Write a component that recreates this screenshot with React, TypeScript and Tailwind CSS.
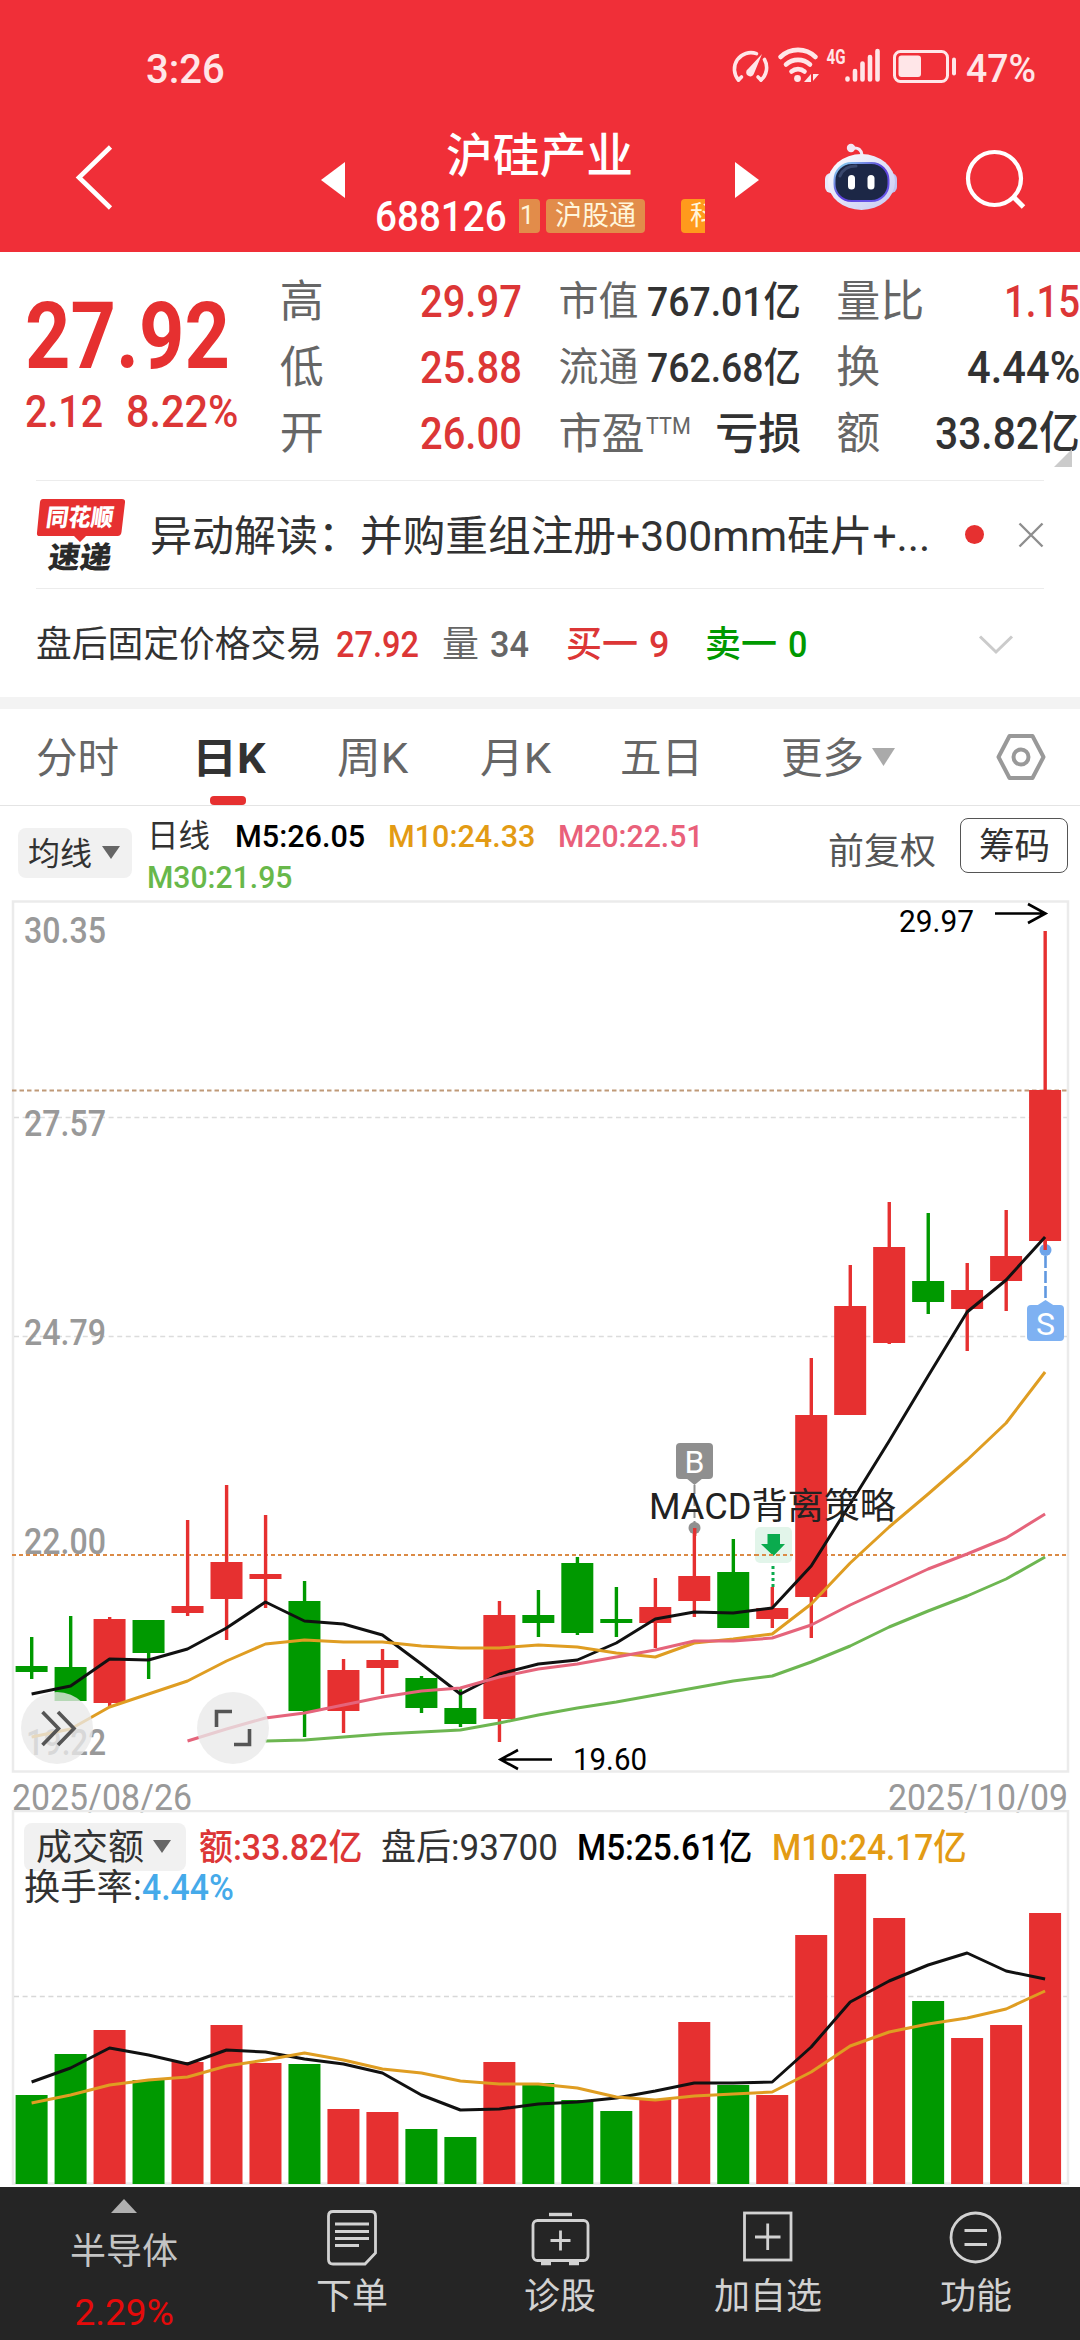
import React, { useLayoutEffect, useRef, useState } from "react";

const RED = "#e63030";
const GREEN = "#009900";
const X0 = 31.6;
const STEP = 38.98;
const cx = (i: number) => X0 + STEP * i;

/** Text squeezed or stretched horizontally to fill the width given by its class. */
function Fit({ className = "", children }: { className?: string; children: React.ReactNode }) {
  const outer = useRef<HTMLSpanElement>(null);
  const inner = useRef<HTMLSpanElement>(null);
  const [scale, setScale] = useState(1);
  useLayoutEffect(() => {
    if (outer.current && inner.current) {
      setScale(outer.current.clientWidth / inner.current.offsetWidth);
    }
  }, []);
  return (
    <span ref={outer} className={"block shrink-0 whitespace-nowrap " + className}>
      <span ref={inner} className="inline-block origin-left" style={{ transform: `scaleX(${scale})` }}>
        {children}
      </span>
    </span>
  );
}

function StatusBar() {
  return (
    <div className="flex h-[93px] items-end text-[#ffe6e8]">
      <Fit className="ml-[146px] w-[79px] text-[41px] leading-[48px] font-medium">3:26</Fit>
      <svg className="mb-px ml-[505px] h-[52px] w-[234px]" viewBox="730 40 234 52" fill="none" stroke="#ffe6e8">
        <g strokeWidth="3.6" strokeLinecap="round">
          <path d="M738.5 80 A16.5 16.5 0 0 1 756.5 53.6" />
          <path d="M764.5 59.5 A16.5 16.5 0 0 1 761 80" />
          <path d="M738.5 80 l3-3 M761 80 l-3-3" />
        </g>
        <path d="M762 54 L748 69 a4 4 0 1 0 6 4.500 Z" fill="#ffe6e8" stroke="none" />
        <g strokeWidth="4.6" strokeLinecap="round">
          <path d="M780.500 57 a25 25 0 0 1 35 0" />
          <path d="M786 64.500 a18 18 0 0 1 24 0" />
          <path d="M791.500 71.500 a10 10 0 0 1 13 0" />
        </g>
        <circle cx="797.500" cy="78.500" r="3.400" fill="#ffe6e8" stroke="none" />
        <path d="M811 74 v8 h-7 Z M813 81 v-7 h6 Z" fill="#ffe6e8" stroke="none" />
        <text x="826.500" y="63.500" textLength="19" lengthAdjust="spacingAndGlyphs" fontSize="20" fontWeight="700" fill="#ffe6e8" stroke="none">4G</text>
        <g strokeWidth="4.600" strokeLinecap="round">
          <path d="M847.500 78.500 v1 M855 71 v8.500 M862.500 63.500 v16 M870 57 v22.500 M877.500 51 v28.500" />
        </g>
        <rect x="894.500" y="51.500" width="53" height="30" rx="6" strokeWidth="3" />
        <rect x="898.500" y="55.500" width="22.500" height="21.500" rx="3" fill="#ffe6e8" stroke="none" />
        <path d="M954 59.500 v14" strokeWidth="4" strokeLinecap="round" />
      </svg>
      <Fit className="ml-[2px] w-[70px] text-[39px] leading-[48px] font-medium">47%</Fit>
    </div>
  );
}

function Robot() {
  return (
    <svg className="ml-[66px] h-[68px] w-[72px]" viewBox="825 143 72 68">
      <defs>
        <linearGradient id="shell" x1="0" y1="0" x2="1" y2="1">
          <stop offset="0" stopColor="#ffffff" />
          <stop offset="1" stopColor="#c5c8f2" />
        </linearGradient>
        <linearGradient id="rim" x1="0" y1="0" x2="1" y2="1">
          <stop offset="0" stopColor="#8fe3f2" />
          <stop offset=".5" stopColor="#5b3fd8" />
          <stop offset="1" stopColor="#6a5cf0" />
        </linearGradient>
      </defs>
      <path d="M853 148 Q861 147 862 155" fill="none" stroke="#f3e9f7" strokeWidth="3" />
      <circle cx="851" cy="148" r="4.200" fill="#f3e6f4" />
      <rect x="825" y="173" width="14" height="20" rx="6" fill="#e9e9fb" />
      <rect x="883" y="173" width="14" height="20" rx="6" fill="#bfc2ef" />
      <ellipse cx="861.500" cy="182" rx="33.500" ry="28" fill="url(#shell)" />
      <rect x="834.500" y="163" width="54" height="38" rx="17" fill="#1c2746" stroke="url(#rim)" strokeWidth="2" />
      <path d="M840 176 q4-10 16-10" fill="none" stroke="#3a486d" strokeWidth="3" strokeLinecap="round" />
      <rect x="848" y="175" width="7" height="14.500" rx="3.500" fill="#fff" />
      <rect x="867.500" y="175" width="7" height="14.500" rx="3.500" fill="#fff" />
    </svg>
  );
}

function TitleBar() {
  return (
    <div className="-mt-px flex h-[160px] items-start text-white">
      <svg className="mt-[51px] ml-[74px] h-[70px] w-[42px]" viewBox="74 143 42 70">
        <path d="M110.500 147 L79 177.500 L110.500 208" fill="none" stroke="#fff" strokeWidth="4.600" />
      </svg>
      <svg className="mt-[70px] ml-[205px] h-[36px] w-[24px]" viewBox="0 0 24 36">
        <path d="M24 0 V36 L0 18 Z" fill="#fff" />
      </svg>
      <div className="ml-[30px] w-[330px]">
        <Fit className="mt-[34px] ml-[71px] w-[187px] text-[47px] leading-[60px] font-medium">沪硅产业</Fit>
        <div className="mt-[11px] flex items-center">
          <Fit className="w-[132px] text-[43px] leading-[38px] font-medium">688126</Fit>
          <div className="ml-[12px] flex h-[34px] w-[186px] items-center overflow-hidden text-[27px] leading-[34px] text-[#fff6dc]">
            <span className="h-[34px] w-[21px] shrink-0 rounded-r-[4px] bg-[#e28c4a] pl-px text-[25px]">1</span>
            <span className="ml-[6px] h-[34px] w-[99px] shrink-0 rounded-[4px] bg-[#e28c4a] text-center">沪股通</span>
            <span className="ml-[36px] h-[34px] w-[60px] shrink-0 rounded-[4px] bg-[#ff9a1c] pl-[9px]">科</span>
          </div>
        </div>
      </div>
      <svg className="mt-[70px] ml-[30px] h-[36px] w-[24px]" viewBox="0 0 24 36">
        <path d="M0 0 V36 L24 18 Z" fill="#fff" />
      </svg>
      <div className="mt-[51px]">
        <Robot />
      </div>
      <svg className="mt-[55px] ml-[66px] h-[64px] w-[66px]" viewBox="963 147 66 64" fill="none" stroke="#fff">
        <circle cx="994.500" cy="178.500" r="26.500" strokeWidth="4.200" />
        <path d="M1014 197.500 L1023.500 207" strokeWidth="5" />
      </svg>
    </div>
  );
}

const label = "text-[#666]";

function Quote() {
  return (
    <section className="relative flex h-[228px] items-start overflow-hidden pt-[17px] text-[#323232]">
      <div className="ml-[25px] w-[255px] pt-[20px] text-[#e63030]">
        <Fit className="w-[205px] text-[92px] leading-[96px] font-bold">27.92</Fit>
        <div className="flex font-medium text-[#dc3636]">
          <Fit className="w-[78px] text-[45px] leading-[54px]">2.12</Fit>
          <Fit className="ml-[23px] w-[112px] text-[45px] leading-[54px]">8.22%</Fit>
        </div>
      </div>
      <div className="w-[243px] text-[44px] leading-[66px]">
        {[["高", "29.97"], ["低", "25.88"], ["开", "26.00"]].map(([k, v]) => (
          <div key={k} className="flex justify-between">
            <span className={label}>{k}</span>
            <Fit className="w-[102px] text-[45px] font-medium text-[#dc3636]">{v}</Fit>
          </div>
        ))}
      </div>
      <div className="ml-[36px] w-[243px] leading-[66px]">
        {[["市值", "767.01亿"], ["流通", "762.68亿"]].map(([k, v]) => (
          <div key={k} className="flex justify-between">
            <span className={"text-[40px] " + label}>{k}</span>
            <Fit className="w-[154px] text-[41px] font-medium">{v}</Fit>
          </div>
        ))}
        <div className="flex">
          <span className={"text-[43px] " + label}>市盈</span>
          <Fit className="-mt-[8px] ml-[2px] w-[45px] text-[24px] text-[#666]">TTM</Fit>
          <span className="ml-auto text-[43px] font-medium">亏损</span>
        </div>
      </div>
      <div className="ml-[35px] w-[244px] text-[44px] leading-[66px]">
        <div className="flex justify-between">
          <span className={label}>量比</span>
          <Fit className="w-[76px] text-[45px] font-medium text-[#dc3636]">1.15</Fit>
        </div>
        <div className="flex justify-between">
          <span className={label}>换</span>
          <Fit className="w-[113px] text-[45px] font-medium">4.44%</Fit>
        </div>
        <div className="flex justify-between">
          <span className={label}>额</span>
          <Fit className="w-[145px] text-[45px] font-medium">33.82亿</Fit>
        </div>
      </div>
      <svg className="absolute top-[197px] right-[8px] h-[18px] w-[18px]" viewBox="0 0 18 18">
        <path d="M18 0 V18 H0 Z" fill="#cbcbcb" />
      </svg>
    </section>
  );
}

function News() {
  return (
    <section className="mx-[36px] flex h-[109px] items-center border-y border-[#ececec] text-[#323232]">
      <svg className="h-[76px] w-[90px]" viewBox="36 496 90 76">
        <path d="M43 498 H122 q3.500 0 3 3.500 L121.500 531 q-.5 4-4 4 H86 L80 541 L74 535 H39.500 q-3 0-2.500-3.500 L40 501 q.5-3 3-3 Z" fill={RED} />
        <g transform="skewX(-8)" fontWeight="900">
          <text x="119" y="525" textLength="67" lengthAdjust="spacingAndGlyphs" fontSize="24" fill="#fff">同花顺</text>
          <text x="127" y="567" textLength="63" lengthAdjust="spacingAndGlyphs" fontSize="30" fill="#2a2a2a">速递</text>
        </g>
      </svg>
      <div className="mt-[4px] flex text-[42px] leading-[60px]">
        <Fit className="ml-[24px] w-[210px]">异动解读：</Fit>
        <Fit className="w-[570px]">并购重组注册+300mm硅片+...</Fit>
      </div>
      <span className="ml-[35px] size-[19px] rounded-full bg-[#e63030]" />
      <svg className="ml-auto h-[26px] w-[26px]" viewBox="0 0 26 26">
        <path d="M1.500 1.500 L24.500 24.500 M24.500 1.500 L1.500 24.500" stroke="#8e8e8e" strokeWidth="2.400" />
      </svg>
    </section>
  );
}

function AfterHours() {
  return (
    <section className="flex h-[108px] items-center pt-[3px] pl-[36px] text-[36px] leading-[60px] text-[#323232]">
      <Fit className="w-[286px]">盘后固定价格交易</Fit>
      <Fit className="ml-[14px] w-[83px] font-medium text-[#dc3636]">27.92</Fit>
      <Fit className="ml-[23px] w-[37px] text-[#666]">量</Fit>
      <Fit className="ml-[11px] w-[39px] font-medium text-[#666]">34</Fit>
      <Fit className="ml-[37px] w-[72px] font-medium text-[#dc3636]">买一</Fit>
      <Fit className="ml-[11px] w-[20px] font-medium text-[#dc3636]">9</Fit>
      <Fit className="ml-[36px] w-[72px] font-medium text-[#009900]">卖一</Fit>
      <Fit className="ml-[11px] w-[19px] font-medium text-[#009900]">0</Fit>
      <svg className="ml-[170px] h-[24px] w-[38px]" viewBox="0 0 38 24">
        <path d="M3 3.500 L19 19 L35 3.500" fill="none" stroke="#cbcbcb" strokeWidth="3" />
      </svg>
    </section>
  );
}

function Tabs() {
  return (
    <nav className="flex h-[97px] items-center border-b border-[#e4e4e4] pt-[4px] text-[42px] leading-[60px] text-[#666]">
      <Fit className="ml-[36px] w-[83px]">分时</Fit>
      <div className="relative ml-[73px]">
        <Fit className="w-[74px] font-bold text-[#323232]">日K</Fit>
        <span className="absolute top-[67px] left-[18px] h-[9px] w-[36px] rounded-[4px] bg-[#e63030]" />
      </div>
      <Fit className="ml-[71px] w-[71px]">周K</Fit>
      <Fit className="ml-[72px] w-[71px]">月K</Fit>
      <Fit className="ml-[69px] w-[83px]">五日</Fit>
      <Fit className="ml-[78px] w-[83px]">更多</Fit>
      <svg className="-mt-[4px] ml-[8px] h-[18px] w-[23px]" viewBox="0 0 23 18">
        <path d="M0 0 H23 L11.500 18 Z" fill="#aaa" />
      </svg>
      <svg className="-mt-[4px] ml-[100px] h-[48px] w-[52px]" viewBox="0 0 52 48" fill="none" stroke="#999" strokeWidth="4" strokeLinejoin="round">
        <path d="M14.500 3 H37.500 L48.500 24 L37.500 45 H14.500 L3.500 24 Z" />
        <circle cx="26" cy="24" r="7.500" />
      </svg>
    </nav>
  );
}

function Caret() {
  return (
    <svg className="-mt-[3px] h-[13px] w-[18px]" viewBox="0 0 18 13">
      <path d="M0 0 H18 L9 13 Z" fill="#666" />
    </svg>
  );
}

function KLegend() {
  return (
    <div className="flex h-[94px] items-start text-[32px] text-[#323232]">
      <div className="mt-[22px] ml-[18px] flex h-[50px] w-[114px] items-center rounded-[8px] bg-[#f1f1f1] pt-[2px] pl-[10px]">
        <Fit className="mr-[10px] w-[64px] leading-[50px]">均线</Fit>
        <Caret />
      </div>
      <div className="mt-[10px] ml-[15px] w-[680px] leading-[41px]">
        <div className="flex">
          <Fit className="w-[63px]">日线</Fit>
          <Fit className="ml-[25px] w-[130px] font-medium text-black">M5:26.05</Fit>
          <Fit className="ml-[23px] w-[147px] font-medium text-[#e39b14]">M10:24.33</Fit>
          <Fit className="ml-[23px] w-[145px] font-medium text-[#e9607a]">M20:22.51</Fit>
        </div>
        <Fit className="w-[145px] font-medium text-[#68b84a]">M30:21.95</Fit>
      </div>
      <Fit className="mt-[21px] ml-px w-[108px] text-[36px] leading-[50px] text-[#555]">前复权</Fit>
      <div className="mt-[12px] ml-[24px] flex h-[55px] w-[108px] items-center justify-center rounded-[8px] border-[1.5px] border-[#555] pt-[3px]">
        <Fit className="w-[71px] text-[36px] leading-[50px]">筹码</Fit>
      </div>
    </div>
  );
}

// [rising, high, low, bodyTop, bodyBottom] in chart units
const candles: [number, number, number, number, number][] = [
  [0, 1637, 1679, 1666, 1672], [0, 1616, 1701, 1667, 1701], [1, 1617, 1707, 1619, 1703],
  [0, 1620, 1679, 1620, 1653], [1, 1520, 1616, 1606, 1613], [1, 1485, 1640, 1562, 1599],
  [1, 1515, 1608, 1574, 1579], [0, 1581, 1737, 1601, 1711], [1, 1659, 1733, 1670, 1711],
  [1, 1649, 1694, 1660, 1668], [0, 1676, 1713, 1678, 1708], [0, 1689, 1727, 1708, 1724],
  [1, 1601, 1742, 1615, 1719], [0, 1590, 1637, 1615, 1623], [0, 1557, 1635, 1563, 1633],
  [0, 1587, 1637, 1619, 1623], [1, 1578, 1648, 1607, 1623], [1, 1528, 1617, 1576, 1601],
  [0, 1539, 1628, 1572, 1628], [1, 1587, 1628, 1608, 1619], [1, 1358, 1638, 1415, 1597],
  [1, 1265, 1415, 1306, 1415], [1, 1202, 1344, 1247, 1343], [0, 1213, 1314, 1281, 1302],
  [1, 1263, 1351, 1290, 1309], [1, 1210, 1311, 1256, 1281], [1, 931, 1250, 1090, 1241],
];

const ma5 = [1694, 1686, 1659, 1660, 1649, 1628, 1602, 1621, 1624, 1635, 1664, 1694, 1674, 1664, 1660, 1643, 1619, 1612, 1613, 1608, 1566, 1504, 1441, 1376, 1312, 1280, 1237];
const ma10 = [1737, 1729, 1707, 1694, 1681, 1661, 1644, 1640, 1642, 1642, 1646, 1648, 1648, 1645, 1647, 1653, 1657, 1643, 1639, 1634, 1604, 1563, 1527, 1494, 1460, 1423, 1372];
const ma20 = [1741, 1729, 1718, 1713, 1705, 1697, 1691, 1688, 1677, 1669, 1664, 1657, 1650, 1641, 1641, 1638, 1625, 1605, 1587, 1569, 1554, 1538, 1514];
const ma30 = [1741, 1740, 1737, 1734, 1732, 1730, 1723, 1715, 1708, 1702, 1695, 1688, 1681, 1676, 1662, 1646, 1627, 1611, 1596, 1579, 1557];

function Line({ data, start = 0, color }: { data: number[]; start?: number; color: string }) {
  return (
    <polyline
      points={data.map((y, i) => `${cx(i + start)},${y}`).join(" ")}
      fill="none"
      stroke={color}
      strokeWidth="3"
      strokeLinejoin="round"
    />
  );
}

function Label({ x, y, w, size = 36, color = "#999", children }: { x: number; y: number; w: number; size?: number; color?: string; children: string }) {
  return (
    <text x={x} y={y} textLength={w} lengthAdjust="spacingAndGlyphs" fontSize={size} fill={color}>
      {children}
    </text>
  );
}

function KChart() {
  return (
    <svg className="relative block h-[910px] w-[1080px] overflow-visible" viewBox="0 900 1080 910">
      <rect x="13" y="901.500" width="1055" height="870" fill="none" stroke="#ebebeb" strokeWidth="2.500" />
      <g stroke="#dcdcdc" strokeWidth="1.300" strokeDasharray="5 3.600">
        <path d="M14 1117.500 H1067 M14 1336.500 H1067" />
      </g>
      <g fontWeight="500">
        <Label x={24} y={943} w={82}>30.35</Label>
        <Label x={24} y={1136} w={82}>27.57</Label>
        <Label x={24} y={1345} w={82}>24.79</Label>
        <Label x={24} y={1554} w={82}>22.00</Label>
        <Label x={26} y={1755} w={80}>19.22</Label>
      </g>
      <path d="M12 1090.500 H1068" stroke="#c09a78" strokeWidth="1.800" strokeDasharray="4.500 3" />
      <path d="M12 1555 H1068" stroke="#db8a45" strokeWidth="2" strokeDasharray="4 3" />
      {candles.map(([up, hi, lo, top, bottom], i) => (
        <g key={i} fill={up ? RED : GREEN}>
          <rect x={cx(i) - 1.600} y={hi} width={3.400} height={lo - hi} />
          <rect x={cx(i) - 16} y={top} width={32} height={bottom - top} />
        </g>
      ))}
      <g fill="#8f8f8f">
        <rect x="676" y="1443" width="37" height="36" rx="4" />
        <path d="M686 1478 H703 L694.500 1485 Z" />
        <circle cx="694.500" cy="1528" r="6" />
        <path d="M694.500 1485 V1528" stroke="#8f8f8f" strokeWidth="2" strokeDasharray="9 3" />
        <path d="M693 1528 h3.400 v8 h-3.400 Z" fill={RED} />
      </g>
      <text x="694.500" y="1473" fontSize="32" fill="#fff" textAnchor="middle">B</text>
      <rect x="755" y="1527" width="37" height="36" rx="5" fill="#e2f5ea" />
      <path d="M767.500 1534 H780 V1544 H785 L773.500 1556 L761 1544 H767.500 Z" fill="#0aab4e" />
      <path d="M773 1566 V1588" stroke="#0aab4e" strokeWidth="3" strokeDasharray="3 3" />
      <path d="M755 1555 H792" stroke="#db8a45" strokeWidth="2" strokeDasharray="4 3" />
      <Line data={ma5} color="#111" />
      <Line data={ma10} color="#df9d22" />
      <Line data={ma20} start={4} color="#e5647b" />
      <Line data={ma30} start={6} color="#6db651" />
      <Label x={649} y={1519} w={247} size={36} color="#222">MACD背离策略</Label>
      <circle cx="1045.500" cy="1250" r="6" fill="#6ea4ea" />
      <path d="M1043.500 1241 h3.400 v9 h-3.400 Z" fill={RED} />
      <path d="M1045.500 1256 V1302" stroke="#6098e0" strokeWidth="2.600" strokeDasharray="12 3" />
      <path d="M1037 1305.500 L1045.500 1300 L1054 1305.500 Z" fill="#7eb1f2" />
      <rect x="1027" y="1305" width="37" height="36" rx="4" fill="#7eb1f2" />
      <text x="1045.500" y="1335" fontSize="32" fill="#fff" textAnchor="middle">S</text>
      <g fill="none" stroke="#000" strokeWidth="2.600">
        <path d="M995 913.500 H1045 M1028 904 L1045.500 913.500 L1028 923" />
        <path d="M552 1759.500 H501 M518 1750 L500.500 1759.500 L518 1769" />
      </g>
      <Label x={899} y={932} w={75} size={32} color="#000">29.97</Label>
      <Label x={573} y={1770} w={74} size={32} color="#000">19.60</Label>
      <g fill="#e9e9e9" fillOpacity=".78">
        <circle cx="57" cy="1728" r="36" />
        <circle cx="233" cy="1728" r="36" />
      </g>
      <g fill="none" stroke="#555" strokeWidth="3.600">
        <path d="M42.500 1712 L58.500 1728.500 L42.500 1745 M58 1712 L74 1728.500 L58 1745" />
        <path d="M232 1711.500 H216.500 V1727 M249.500 1729 V1744.500 H234" />
      </g>
      <Label x={12} y={1810} w={180}>2025/08/26</Label>
      <Label x={888} y={1810} w={180}>2025/10/09</Label>
    </svg>
  );
}

const volTops = [2095, 2054, 2030, 2080, 2062, 2025, 2063, 2064, 2109, 2112, 2129, 2137, 2062, 2083, 2100, 2111, 2099, 2022, 2085, 2095, 1935, 1874, 1918, 2001, 2038, 2025, 1913];
const vol5 = [2082, 2068, 2048, 2055, 2064, 2050, 2052, 2059, 2064, 2073, 2095, 2110, 2109, 2104, 2102, 2098, 2091, 2083, 2083, 2082, 2047, 2002, 1981, 1965, 1953, 1971, 1979];
const vol10 = [2103, 2095, 2085, 2080, 2077, 2066, 2060, 2053, 2060, 2069, 2073, 2081, 2084, 2084, 2088, 2097, 2100, 2096, 2094, 2092, 2072, 2046, 2032, 2024, 2018, 2009, 1991];

function Volume() {
  return (
    <section className="relative h-[377px] text-[36px] text-[#323232]">
      <svg className="absolute inset-0 h-[377px] w-[1080px]" viewBox="0 1810 1080 377">
        <path d="M13 1811 H1068 V2183.500 H13 Z" fill="none" stroke="#ebebeb" strokeWidth="2.500" />
        <path d="M14 1996.500 H1067" stroke="#d8d8d8" strokeWidth="1.300" strokeDasharray="5 3.600" />
        {volTops.map((y, i) => (
          <rect key={i} x={cx(i) - 16} y={y} width={32} height={2184 - y} fill={candles[i][0] ? RED : GREEN} />
        ))}
        <Line data={vol5} color="#111" />
        <Line data={vol10} color="#df9d22" />
      </svg>
      <div className="relative flex items-center pt-[11px] pl-[24px] leading-[48px]">
        <div className="flex h-[48px] w-[162px] items-center rounded-[8px] bg-[#f1f1f1] pt-[3px] pl-[12px]">
          <Fit className="mr-[9px] w-[108px]">成交额</Fit>
          <Caret />
        </div>
        <Fit className="mt-[3px] ml-[13px] w-[163px] font-medium text-[#dc3636]">额:33.82亿</Fit>
        <Fit className="mt-[3px] ml-[19px] w-[177px]">盘后:93700</Fit>
        <Fit className="mt-[3px] ml-[19px] w-[175px] font-medium text-black">M5:25.61亿</Fit>
        <Fit className="mt-[3px] ml-[20px] w-[195px] font-medium text-[#e39b14]">M10:24.17亿</Fit>
      </div>
      <div className="relative -mt-[8px] flex pl-[24px] leading-[48px]">
        <Fit className="w-[118px]">换手率:</Fit>
        <Fit className="w-[92px] font-medium text-[#45aaea]">4.44%</Fit>
      </div>
    </section>
  );
}

function NavItem({ text, children }: { text: string; children: React.ReactNode }) {
  return (
    <div className="flex w-[208px] flex-col items-center">
      <svg className="mt-[20px] h-[60px] w-[60px]" viewBox="0 0 60 60" fill="none" stroke="#d2d2d2" strokeWidth="2.800">
        {children}
      </svg>
      <span className="mt-[6px] text-[36px] leading-[48px]">{text}</span>
    </div>
  );
}

function BottomNav() {
  return (
    <footer className="flex h-[153px] bg-[#252525] text-[#d2d2d2]">
      <div className="flex w-[248px] flex-col items-center">
        <svg className="mt-[12px] h-[14px] w-[26px]" viewBox="0 0 26 14">
          <path d="M13 0 L26 14 H0 Z" fill="#b0b0b0" />
        </svg>
        <span className="mt-[15px] text-[36px] leading-[48px] text-[#c4c4c4]">半导体</span>
        <Fit className="mt-[13px] w-[99px] text-[37px] leading-[48px] text-[#e60a0a]">2.29%</Fit>
      </div>
      <NavItem text="下单">
        <path d="M11 4.500 H49 q4.500 0 4.500 4.500 V46 L43 57 H11 q-4.500 0-4.500-4.500 V9 q0-4.500 4.500-4.500 Z" />
        <path d="M13 17 H47 M13 24.500 H47 M13 31.500 H47 M13 38.500 H37" strokeWidth="3" />
      </NavItem>
      <NavItem text="诊股">
        <rect x="3" y="13.500" width="55" height="40" rx="4.500" />
        <path d="M19 7.500 H42" strokeWidth="3.400" />
        <path d="M11 56.500 H21 M39 56.500 H49" strokeWidth="3.600" />
        <path d="M30.500 23.500 V43.500 M20.500 33.500 H40.500" />
      </NavItem>
      <NavItem text="加自选">
        <rect x="6.500" y="6" width="46.500" height="47" />
        <path d="M29.700 16.500 V43 M17 30 H42.500" />
      </NavItem>
      <NavItem text="功能">
        <circle cx="29.500" cy="30.500" r="24.500" />
        <path d="M18.500 23.500 H41 M18.500 37.500 H41" />
      </NavItem>
    </footer>
  );
}

export default function App() {
  return (
    <div className="h-[2340px] w-[1080px] overflow-hidden bg-white font-['Roboto','Noto_Sans_CJK_SC',sans-serif]">
      <header className="h-[252px] bg-[#f02f38]">
        <StatusBar />
        <TitleBar />
      </header>
      <Quote />
      <News />
      <AfterHours />
      <div className="h-[12px] bg-[#f3f3f3]" />
      <Tabs />
      <KLegend />
      <KChart />
      <Volume />
      <BottomNav />
    </div>
  );
}
